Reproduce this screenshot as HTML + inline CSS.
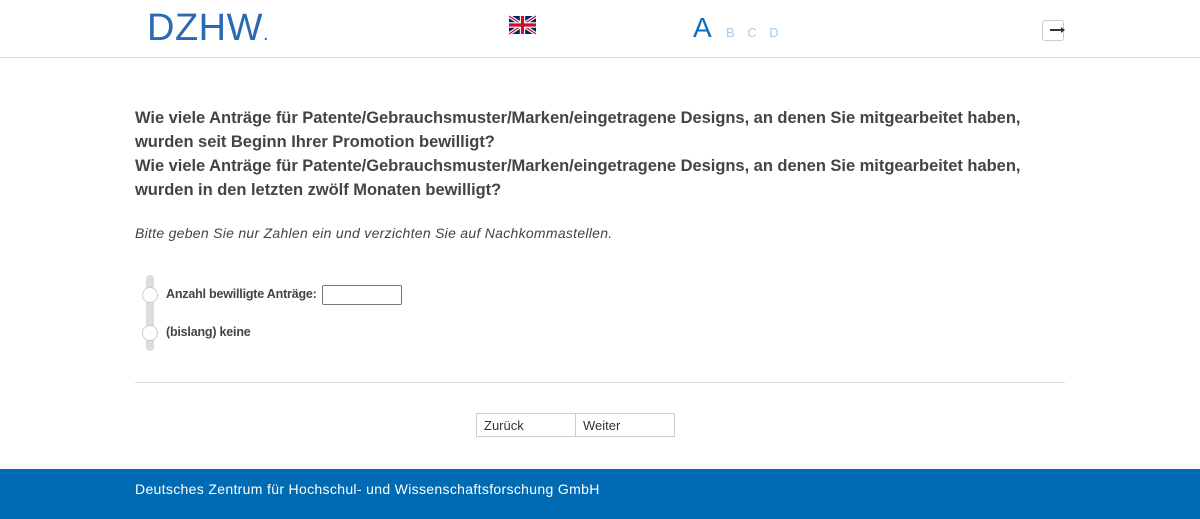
<!DOCTYPE html>
<html><head><meta charset="utf-8"><style>
body{margin:0;width:1200px;height:519px;background:#fff;font-family:"Liberation Sans",sans-serif;position:relative;overflow:hidden;color:#333}
.abs{position:absolute}
.hdr{top:57px;left:0;width:1200px;height:1px;background:#ddd}
.logo{left:147px;top:7px;font-size:38px;color:#2a6ab5;letter-spacing:0.5px;white-space:nowrap}
.q{left:135px;top:106px;font-size:16.5px;font-weight:bold;line-height:24px;color:#444;white-space:nowrap;letter-spacing:-0.03px}
.hint{left:135px;top:225px;font-size:14px;font-style:italic;color:#444;letter-spacing:0.28px;white-space:nowrap}
.lbl{font-size:12.5px;font-weight:bold;color:#444;letter-spacing:-0.2px;white-space:nowrap}
.rad{width:14px;height:14px;border:1px solid #ccc;border-radius:50%;background:#fff}
.btn{top:413px;height:24px;border:1px solid #ccc;font-size:13px;line-height:24px;padding-left:7px;box-sizing:border-box;color:#333}
.foot{left:0;top:469px;width:1200px;height:50px;background:#006ab3;color:#fff;font-size:14px;letter-spacing:0.33px;white-space:nowrap}
</style></head><body>
<div class="abs logo">DZHW<span style="font-size:20px">.</span></div>
<svg class="abs" style="left:509px;top:15px" width="27" height="20" viewBox="0 0 60 40"><rect width="60" height="40" fill="#012169"/><path d="M0,0L60,40M60,0L0,40" stroke="#fff" stroke-width="8"/><path d="M0,0L60,40M60,0L0,40" stroke="#c8102e" stroke-width="3"/><path d="M30,0V40M0,20H60" stroke="#fff" stroke-width="12"/><path d="M30,0V40M0,20H60" stroke="#c8102e" stroke-width="7"/></svg>
<div class="abs" style="left:693px;top:12px;font-size:28px;color:#0a6fc2">A</div>
<div class="abs" style="left:726px;top:25px;font-size:13px;color:#a8cbea;word-spacing:9px">B C D</div>
<div class="abs" style="left:1042px;top:20px;width:20px;height:19px;border:1px solid #ccc;border-radius:3px"></div>
<div class="abs" style="left:1050px;top:29px;width:12px;height:1.5px;background:#333"></div>
<div class="abs" style="left:1061px;top:27px;border-left:4px solid #333;border-top:3px solid transparent;border-bottom:3px solid transparent"></div>
<div class="abs hdr"></div>
<div class="abs q">Wie viele Anträge für Patente/Gebrauchsmuster/Marken/eingetragene Designs, an denen Sie mitgearbeitet haben,<br>wurden seit Beginn Ihrer Promotion bewilligt?<br>Wie viele Anträge für Patente/Gebrauchsmuster/Marken/eingetragene Designs, an denen Sie mitgearbeitet haben,<br>wurden in den letzten zwölf Monaten bewilligt?</div>
<div class="abs hint">Bitte geben Sie nur Zahlen ein und verzichten Sie auf Nachkommastellen.</div>
<div class="abs" style="left:146px;top:275px;width:8px;height:76px;background:#ddd;border-radius:4px"></div>
<div class="abs rad" style="left:142px;top:287px"></div>
<div class="abs rad" style="left:142px;top:325px"></div>
<div class="abs lbl" style="left:166px;top:287px">Anzahl bewilligte Anträge:</div>
<div class="abs" style="left:322px;top:285px;width:78px;height:18px;border:1px solid #777;border-radius:2px"></div>
<div class="abs lbl" style="left:166px;top:325px">(bislang) keine</div>
<div class="abs" style="left:135px;top:382px;width:930px;height:1px;background:#ddd"></div>
<div class="abs btn" style="left:476px;width:100px">Zurück</div>
<div class="abs btn" style="left:575px;width:100px">Weiter</div>
<div class="abs foot"><div style="position:absolute;left:135px;top:12px">Deutsches Zentrum für Hochschul- und Wissenschaftsforschung GmbH</div></div>
</body></html>
